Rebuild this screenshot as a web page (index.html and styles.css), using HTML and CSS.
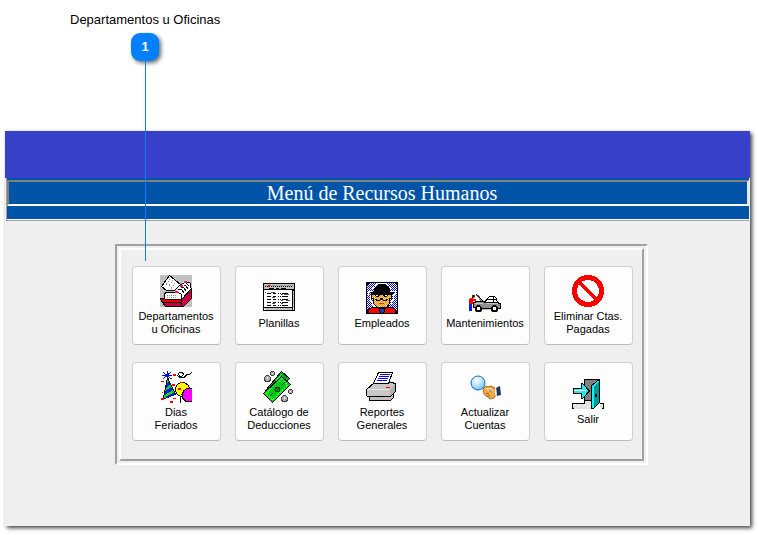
FILE: index.html
```html
<!DOCTYPE html>
<html lang="es">
<head>
<meta charset="utf-8">
<title>Menú de Recursos Humanos</title>
<link rel="stylesheet" href="styles.css">
</head>
<body>
<div class="callout">
  <span class="callout-label">Departamentos u Oficinas</span>
  <span class="callout-badge">1</span>
</div>
<main class="window">
  <div class="banner"></div>
  <header class="title-band">
    <h1 class="title">Menú de Recursos Humanos</h1>
    <div class="title-strip"></div>
  </header>
  <div class="content">
    <nav class="panel">
      <div class="menu">
        <button class="item" type="button">
          <svg class="icon" viewBox="0 0 32 32" aria-hidden="true">
            <defs><pattern id="redmix" width="2" height="2" patternUnits="userSpaceOnUse"><path fill="#f00020" d="M0 0h2v2H0z"/><path fill="#a00060" d="M0 0h1v1H0zM1 1h1v1H1z"/></pattern></defs>
            <path fill="#c0c0c0" d="M0 0h32v32H0z"/>
            <path fill="#fff" d="M17 12l7-5h5l2 2v6L20 26l-4-8z"/>
            <path stroke="#000" d="M18.500 11.500l6-4h5l1 1v4M17.500 14.500h4l3 4M20.500 12.500h3l3 4M23.500 10.500h2l3 4M26.500 8.500l3 3"/>
            <path fill="#fff" stroke="#000" d="M1.500 11.500l8-11 11 9-3 3-3 3H6.500z"/>
            <path fill="#fff" d="M3 11l6-9 9 8-4 4H7z"/>
            <path stroke="#909090" stroke-dasharray="2 1" d="M6 9.500l4-5M9 10.500l4-5M11 13.500l4-5"/>
            <path fill="#fff" stroke="#000" d="M4.500 24.500v-6l2-1h12l3 2v5z"/>
            <path stroke="#909090" stroke-dasharray="1 1" d="M7 20.500h9M7 22.500h9"/>
            <path fill="url(#redmix)" stroke="#000" d="M.5 23.500h3l1 1h17l10-11v10l-8 8H5.500l-3-4z"/>
            <path fill="#f00000" d="M1 24h3l1 1h16v2H3z"/>
            <path stroke="#000" d="M3 27.500h18M21.500 25v6"/>
            <path fill="#ff1080" d="M15 16h3v2h-3zM20 10h3v2h-3zM24 6h3v2h-3z"/>
          </svg>
          <span>Departamentos<br>u Oficinas</span>
        </button>
        <button class="item" type="button">
          <svg class="icon" viewBox="0 0 32 32" aria-hidden="true">
            <path fill="#000" d="M0 1h32v28H0z"/>
            <path fill="#c0c0c0" d="M1 2h30v5H1zM1 26h28v2H1zM30 9h1v17h-1z"/>
            <path fill="#fff" d="M1 8h28v17H1z"/>
            <path fill="#fff" d="M30 26h1v2h-1zM1 26h1v2H1z"/>
            <path stroke="#000" stroke-dasharray="1 1" d="M2 4.500h28"/>
            <path stroke="#808080" stroke-dasharray="1 1" d="M3 3.500h27"/>
            <path stroke="#000" d="M6 6.500h5M13 6.500h3M18 6.500h5"/>
            <path fill="#f00" d="M5 3h2v2H5z"/>
            <path stroke="#000" stroke-dasharray="4 2 3 2 1 1 1 1 6 7" d="M4 11.500h24M4 14.500h24M4 17.500h24M4 20.500h24M4 23.500h24"/>
            <path stroke="#555" d="M2 10.500h1M8 10.500h4M18 12.500h2M21 12.500h5M9 15.500h3M18 18.500h2M9 21.500h3M18 21.500h2M23 18.500h4"/>
          </svg>
          <span>Planillas</span>
        </button>
        <button class="item" type="button">
          <svg class="icon" viewBox="0 0 32 32" aria-hidden="true">
            <defs>
              <pattern id="sky" width="2" height="2" patternUnits="userSpaceOnUse"><path fill="#fff" d="M0 0h2v2H0z"/><path fill="#0000f0" d="M0 0h1v1H0zM1 1h1v1H1z"/></pattern>
              <pattern id="skin" width="2" height="2" patternUnits="userSpaceOnUse"><path fill="#ffe000" d="M0 0h2v2H0z"/><path fill="#e08090" d="M0 0h1v1H0zM1 1h1v1H1z"/></pattern>
            </defs>
            <path fill="#000" d="M0 0h32v32H0z"/>
            <path fill="url(#sky)" d="M4 1h24l3 3v24l-3 3H4l-3-3V4z"/>
            <path fill="none" stroke="#fff" d="M2.500 12.500v-3h3l2-5 4-3h8l4 3 2 5h4v3l-2 1v5l-2 1v3l-3 3M4.500 13.500v5l2 1v3l3 3"/>
            <path fill="url(#skin)" stroke="#000" d="M7.500 12.500h17l1-1v5h-2v5l-3 4h-9l-4-4v-5h-2v-5z"/>
            <path fill="#000" d="M4 11v-1h4V7l2-3 3-2h6l3 2 2 3v3h4v1l-3 1H7z"/>
            <path fill="#000" d="M9 12h5v2h-1v1h-3v-1H9zM17 12h5v2h-1v1h-3v-1h-1z"/>
            <path stroke="#fff" d="M10 13.500h2M19 13.500h2"/>
            <path fill="#000" d="M9 17h2v1h3v-2h3v2h3v-1h2v1h-1v1h-4v-1h-3v1h-4v-1H9z"/>
            <path stroke="#c04040" d="M13 21.500h5"/>
            <path fill="#f00" stroke="#000" d="M2.500 31.500v-4l3-2h5l4 1h3l4-1h5l3 2v4z"/>
            <path fill="#1040c0" stroke="#000" d="M13.500 26.500h5v2l-1 3h-3l-1-3z"/>
          </svg>
          <span>Empleados</span>
        </button>
        <button class="item" type="button">
          <svg class="icon" viewBox="0 0 32 32" aria-hidden="true">
            <path fill="#c0c0c0" d="M6 29h7v1H6zM22 29h7v1h-7zM12 27h10v1H12z"/>
            <path fill="#0020ff" d="M0 21h3v8H0z"/>
            <path fill="#f00" d="M1 16h3v1h3v2H4v3H0v-4z"/>
            <path fill="#402000" d="M3 13h3v3H3z"/><path fill="#fd0" d="M5 15h1v1H5z"/>
            <path fill="none" stroke="#808080" stroke-width="2" d="M8 13l5 6"/>
            <path fill="none" stroke="#000" d="M7.500 12.500l7 7"/>
            <path fill="#fff" stroke="#000" d="M15.500 20.500l3-4 2-2h5l2 2 1 4z"/>
            <path fill="none" stroke="#000" d="M24.500 15v5M18 17.500h9"/>
            <path fill="#909090" stroke="#000" d="M4.500 20.500l4-1h6l2 1h11l4 1v5h-3l-3-2-3 2H13l-3-2-4 1h-1.500z"/>
            <path stroke="#c8c8c8" d="M6 21.500h8M17 21.500h12"/>
            <path fill="#000" d="M7 19h7v1H7z"/>
            <circle cx="9.500" cy="26.500" r="3.500" fill="#000"/><circle cx="9.500" cy="26.500" r="1.500" fill="#fff"/>
            <circle cx="25.500" cy="26.500" r="3.500" fill="#000"/><circle cx="25.500" cy="26.500" r="1.500" fill="#fff"/>
          </svg>
          <span>Mantenimientos</span>
        </button>
        <button class="item" type="button">
          <svg class="icon" viewBox="0 0 32 32" aria-hidden="true">
            <circle cx="16" cy="16" r="13.500" fill="none" stroke="#f00" stroke-width="5"/>
            <path stroke="#f00" stroke-width="4" d="M7 7l18 18"/>
          </svg>
          <span>Eliminar Ctas.<br>Pagadas</span>
        </button>
        <button class="item" type="button">
          <svg class="icon" viewBox="0 0 32 32" aria-hidden="true">
            <path fill="#10e020" stroke="#000" d="M7.500 6.500l8 17-11 4-1-1z"/>
            <path fill="#0020d0" d="M6 13l3-3 1 3-4 4zM5 20l6-4 2 3-8 5zM5 26l8-4 2 2-9 3z"/>
            <path stroke="#0010e0" d="M7.500 0v8M2 4.500h10M3 1l8 7M11 1L3 8"/>
            <path fill="none" stroke="#000" d="M23.500 6.500h-4l-2-2 2-3h3l1 2-2 2h-2v-2M24 6.500l3-3h2l3-2"/>
            <circle cx="22.500" cy="18.500" r="7" fill="#ff0" stroke="#000"/>
            <path stroke="#000" d="M20.500 25v7"/>
            <path fill="#f0f" stroke="#000" d="M33 17.500h-6l-3 2-2 4 1 4 3 3h7z"/>
            <path fill="#f00" d="M1 10h3v1H1zM13 3h3v2h-3zM12 13h3v2h-3zM18 17h3v2h-3zM1 27h3v2H1zM10 30h3v2h-3zM13 27h3v1h-3zM20 11h3v1h-3zM11 7h1v1h-1zM2 21h1v1H2z"/>
          </svg>
          <span>Dias<br>Feriados</span>
        </button>
        <button class="item" type="button">
          <svg class="icon" viewBox="0 0 32 32" aria-hidden="true">
            <path fill="#00a820" stroke="#000" d="M2.500 19.500l16-19 8 7-15 18z"/>
            <path stroke="#30e040" d="M5 19L19 3"/>
            <path fill="#00c818" stroke="#000" d="M.5 22.500l18-17 9 8-18 18z"/>
            <path fill="none" stroke="#40f040" stroke-dasharray="2 1" d="M3 22.500L18.500 8l6 6-15 15z"/>
            <circle cx="14.500" cy="18.500" r="2.500" fill="#009010" stroke="#003800"/>
            <path stroke="#003800" d="M7 25l3-3M19 14l3-3"/>
            <g fill="#b0b0b0" stroke="#404040"><circle cx="4.500" cy="7.500" r="3"/><circle cx="9.500" cy="2.500" r="2"/><circle cx="27.500" cy="20.500" r="2"/><circle cx="21.500" cy="27.500" r="3"/></g>
            <path fill="#eee" d="M4 6h1v2H4zM9 2h1v1H9zM27 20h1v1h-1zM21 26h1v2h-1z"/>
          </svg>
          <span>Catálogo de<br>Deducciones</span>
        </button>
        <button class="item" type="button">
          <svg class="icon" viewBox="0 0 32 32" aria-hidden="true">
            <path fill="#c8c8c8" stroke="#000" d="M.5 18.500l8-7h17l4 1v8l-5 5H1.500l-1-1z"/>
            <path stroke="#e8e8e8" d="M2 18.500h21"/>
            <path fill="#b0b0b0" d="M24 18l5-5v7l-5 5z"/>
            <path fill="#fff" stroke="#000" d="M7.500 12.500l5-11h14l-4 11z"/>
            <path stroke="#00f" d="M14 3.500h10M13 5.500h10M12 7.500h10M11 9.500h10"/>
            <path stroke="#f00" d="M20 16.500h4"/>
            <path fill="#c0c0c0" stroke="#000" d="M3.500 25.500h21l3-3v4l-3 3h-21z"/>
          </svg>
          <span>Reportes<br>Generales</span>
        </button>
        <button class="item" type="button">
          <svg class="icon smooth" viewBox="0 0 32 32" aria-hidden="true">
            <defs><radialGradient id="lens" cx=".4" cy=".3" r=".7"><stop offset="0" stop-color="#fff"/><stop offset=".5" stop-color="#c0e8ff"/><stop offset="1" stop-color="#78c0f8"/></radialGradient></defs>
            <path fill="#f0a848" stroke="#b06820" d="M14 18l3-3 2 1 3-1 4 2 2 5-3 5-4 1-6-5z"/>
            <path fill="#ffd090" d="M16 17l6 0 3 3-3 1-4-2z"/>
            <path fill="none" stroke="#a85c18" d="M17 22l3 1M18 25l3 0M20 19l3 2"/>
            <path fill="#183860" d="M27 17l4-2 1 9-4 1z"/><path fill="#f0e8d8" d="M26 17l1 0 1 6-2 2z"/>
            <circle cx="9" cy="12" r="7" fill="url(#lens)" stroke="#2468b8" stroke-width="1"/>
          </svg>
          <span>Actualizar<br>Cuentas</span>
        </button>
        <button class="item" type="button">
          <svg class="icon" viewBox="0 0 32 32" aria-hidden="true">
            <path fill="#e0e0e0" d="M0 25h12l2-3h6v9H1zM28 25h4v5h-4z"/>
            <path stroke="#fff" d="M2 28l2-2M6 29l3-3M11 29l5-5M15 30l4-4"/>
            <path fill="#808080" stroke="#000" d="M12.500 22.500v-21h15v21z"/>
            <path fill="#e0e0e0" d="M13 23h7v3h-7z"/>
            <path fill="none" stroke="#000" d="M0 25.500h12.500v-3M28 25.500h4M.5 25v5M31.500 25v5M0 30.500h2M30 30.500h2"/>
            <path fill="#009898" stroke="#000" d="M19.500 7.500l8-6v23l-6 6h-2z"/>
            <path fill="#0ff" d="M20 8l6-5h1v1l-5 4v22h-2z"/>
            <path fill="#fff" stroke="#000" d="M23.500 16.500h1v2h-1z"/>
            <path fill="#20e8f0" stroke="#000" d="M1.500 10.500h8v-5h1l7 7.500-7 7.500h-1v-5h-8z"/>
            <path stroke="#fff" d="M2 12.500h12"/>
          </svg>
          <span>Salir</span>
        </button>
      </div>
    </nav>
  </div>
</main>
</body>
</html>
```
FILE: styles.css
```css
* { box-sizing: border-box; }

body {
  margin: 0;
  background: #fff;
  font-family: "Liberation Sans", Arial, sans-serif;
  color: #000;
}

.callout {
  display: flex;
  flex-direction: column;
  align-items: center;
  gap: 5px;
  width: fit-content;
  margin-left: 70px;
  padding-top: 12px;
}

.callout-label {
  font-size: 13px;
  line-height: 16px;
}

.callout-badge {
  position: relative;
  z-index: 1;
  width: 28px;
  height: 28px;
  border-radius: 9px;
  background: #0080ff;
  box-shadow: 2px 2px 4px rgba(0, 0, 0, .6);
  color: #fff;
  font-size: 13px;
  font-weight: bold;
  line-height: 28px;
  text-align: center;
}

/* Leader line from the badge down to the menu item */
.callout-badge::after {
  content: "";
  position: absolute;
  top: 100%;
  left: 50%;
  width: 1px;
  height: 200px;
  background: #0c7cee;
}

.window {
  margin: 70px 9px 9px 5px;
  background: #efefef;
  box-shadow: 2px 2px 4px rgba(0, 0, 0, .75);
}

.banner {
  height: 47px;
  background: #3740c8;
}

.title-band {
  margin: 0 1px;
  padding-top: 2px;
  border-left: 1px solid #a0a0a0;
  border-bottom: 1px solid #a0a0a0;
  background: #0054a8;
}

.title {
  margin: 0;
  padding-left: 8px;
  border: 2px solid;
  border-color: #808080 #e8e8e8 #fff #808080;
  color: #fff;
  font-family: "Liberation Serif", "Times New Roman", serif;
  font-size: 20px;
  font-weight: normal;
  line-height: 22px;
  text-align: center;
}

.title-strip {
  height: 14px;
  border-bottom: 1px solid #fff;
}

.content { padding: 23px 102px 61px 110px; }

.panel {
  padding: 2px;
  border: 2px solid;
  border-color: #a0a0a0 #fff #fff #a0a0a0;
}

.menu {
  display: grid;
  grid-template-columns: repeat(5, 1fr);
  gap: 17px 14px;
  padding: 16px 9px 18px 11px;
  border: 2px solid;
  border-color: #fff #a0a0a0 #a0a0a0 #fff;
}

.item {
  display: flex;
  flex-direction: column;
  align-items: center;
  justify-content: center;
  gap: 3px;
  min-width: 0;
  height: 79px;
  padding: 0 1px 0 0;
  border: 1px solid #d0d0d0;
  border-bottom-color: #bcbcbc;
  border-radius: 4px;
  background: #fdfdfd;
  color: #000;
  font-family: "Liberation Sans", Arial, sans-serif;
  font-size: 11px;
  line-height: 13px;
  text-align: center;
}

.icon {
  width: 32px;
  height: 32px;
  fill: none;
  shape-rendering: crispEdges;
}

.smooth { shape-rendering: auto; }
```
